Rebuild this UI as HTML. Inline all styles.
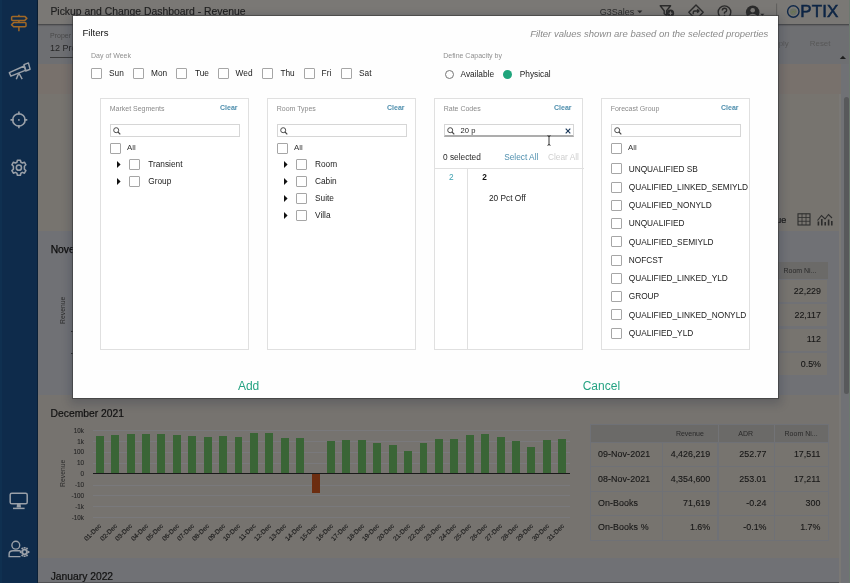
<!DOCTYPE html>
<html><head><meta charset="utf-8">
<style>
*{margin:0;padding:0;box-sizing:border-box}
html,body{width:850px;height:583px;overflow:hidden;background:#707175;font-family:"Liberation Sans",sans-serif}
.a{position:absolute}
.t{position:absolute;white-space:nowrap;line-height:1}
.b{-webkit-text-stroke:0.25px currentColor}
.cb{position:absolute;border:1px solid #a6a6a6;border-radius:1px;background:#fff}
svg{position:absolute;overflow:visible}
#root{position:absolute;left:0;top:0;width:850px;height:583px;overflow:hidden;filter:blur(0.3px)}
</style></head><body>
<div id="root">
<div class="a" style="left:0px;top:0px;width:38px;height:583px;background:#0e2b4b"></div>
<div class="a" style="left:0px;top:0px;width:2px;height:583px;background:#0f3050"></div>
<div class="a" style="left:37px;top:0px;width:1px;height:583px;background:#0a2038"></div>
<div class="a" style="left:38px;top:24px;width:812px;height:40px;background:#6e6f72"></div>
<div class="a" style="left:38px;top:0px;width:812px;height:24px;background:#7a7875;box-shadow:0 1px 1.5px rgba(0,0,0,.45)"></div>
<div class="a" style="left:38px;top:64px;width:803px;height:30px;background:#78716c"></div>
<div class="a" style="left:38px;top:94px;width:803px;height:137px;background:#77746f"></div>
<div class="a" style="left:38px;top:231px;width:803px;height:164px;background:#707175"></div>
<div class="a" style="left:38px;top:395px;width:803px;height:163px;background:#76736f"></div>
<div class="a" style="left:38px;top:558px;width:803px;height:24px;background:#707175"></div>
<div class="a" style="left:38px;top:582px;width:812px;height:1px;background:#505154"></div>
<div class="a" style="left:839px;top:94px;width:2px;height:489px;background:#7a7875"></div>
<div class="a" style="left:841px;top:64px;width:8px;height:519px;background:#707175"></div>
<div class="a" style="left:843.8px;top:96.8px;width:5px;height:297px;background:#58595b;border-radius:3px"></div>
<div class="a" style="left:849px;top:0px;width:1px;height:583px;background:#6b7a6e"></div>
<div class="t" style="left:50.40px;top:7.22px;font-size:10.4px;color:#1e1e1e;-webkit-text-stroke:0.15px #1e1e1e">Pickup and Change Dashboard - Revenue</div>
<div class="t" style="left:50.00px;top:32.18px;font-size:7px;color:#4a4a4a;">Proper</div>
<div class="t" style="left:50.00px;top:43.90px;font-size:9px;color:#262626;">12 Properties</div>
<div class="a" style="left:50px;top:57px;width:120px;height:1px;background:#3a3a3a"></div>
<div class="t" style="left:599.70px;top:7.90px;font-size:9px;color:#2a2a2a;">G3Sales</div>
<div class="t" style="left:769.00px;top:40.44px;font-size:7.9px;color:#585858;">Apply</div>
<div class="t" style="left:809.80px;top:40.44px;font-size:7.9px;color:#585858;">Reset</div>
<svg style="left:839px;top:55px" width="8" height="5" viewBox="0 0 8 5"><path d="M0.8 4H7L3.9 0.8Z" fill="#1e1e1e"/></svg>
<div class="t" style="left:50.70px;top:244.87px;font-size:10.3px;color:#0d0d0d;-webkit-text-stroke:0.25px #0d0d0d">November 2021</div>
<div class="a" style="left:71px;top:331.3px;width:2px;height:1.2px;background:#333"></div>
<div class="a" style="left:71px;top:353.3px;width:2px;height:1.2px;background:#333"></div>
<svg style="left:0;top:0" width="38" height="200" viewBox="0 0 38 200">
<g fill="none" stroke="#a06826" stroke-width="1.5" stroke-linejoin="round">
<path d="M12.6 16.4 H24.8 L26.9 18.4 L24.8 20.4 H12.6 Q11.6 20.4 11.6 19.4 V17.4 Q11.6 16.4 12.6 16.4Z"/>
<path d="M13.6 22.6 H25 Q26 22.6 26 23.6 V25.8 Q26 26.8 25 26.8 H13.6 L11.5 24.7Z"/>
<path d="M18.9 14.8 V16.4 M18.9 20.4 V22.6 M18.9 26.8 V31.2"/>
</g>
<g fill="none" stroke="#9aa0a8" stroke-width="1.45" stroke-linejoin="round">
<path d="M9.3 72.6 L24.2 66 L25.9 70.2 L10.9 76.2Z"/>
<path d="M24 64.6 L28.4 62.9 L30.1 69.3 L25.7 71Z"/>
<path d="M18.7 73.4 L16.3 79.2 M19 73.4 L22.2 79.2"/>
</g>
<g fill="none" stroke="#9aa0a8" stroke-width="1.6">
<circle cx="18.9" cy="119.9" r="6.2"/>
<path d="M18.9 111.5 V114.8 M18.9 125 V128.3 M10.5 119.9 H13.8 M24 119.9 H27.3"/>
</g>
<circle cx="18.9" cy="119.9" r="0.9" fill="#9aa0a8"/>
<g fill="none" stroke="#9aa0a8" stroke-width="1.55" stroke-linejoin="round">
<path d="M17.4 160.2 H20.4 L20.9 162.2 L22.4 163 L24.4 162.2 L25.9 164.8 L24.4 166.2 V169.2 L25.9 170.6 L24.4 173.2 L22.4 172.4 L20.9 173.2 L20.4 175.2 H17.4 L16.9 173.2 L15.4 172.4 L13.4 173.2 L11.9 170.6 L13.4 169.2 V166.2 L11.9 164.8 L13.4 162.2 L15.4 163 L16.9 162.2Z"/>
<circle cx="18.9" cy="167.7" r="2.6"/>
</g>
</svg>
<svg style="left:0;top:480px" width="38" height="100" viewBox="0 480 38 100">
<g fill="none" stroke="#9aa0a8" stroke-width="1.5">
<rect x="10.2" y="493.2" width="17" height="10.6" rx="1.6"/>
<path d="M13 508.4 H24.6"/>
</g>
<path d="M17 504 H20.6 L21 507.5 H16.6Z" fill="#9aa0a8"/>
<g fill="none" stroke="#9aa0a8" stroke-width="1.4">
<circle cx="15.8" cy="545.2" r="3.9"/>
<path d="M20.5 550.8 H13 Q9.1 550.8 9.1 554.3 V556.6 H20.5"/>
</g>
<g fill="#9aa0a8">
<circle cx="24.6" cy="552" r="3.3"/>
<path d="M23.7 546.9 H25.5 L25.9 548.6 H23.3Z M23.7 557.1 H25.5 L25.9 555.4 H23.3Z" />
<path d="M19.8 551.1 V552.9 L21.6 553.3 V550.7Z M29.4 551.1 V552.9 L27.6 553.3 V550.7Z"/>
<path d="M21 548.4 L22.3 547.2 L23.4 548.6 L22.2 549.8Z M28.2 555.6 L26.9 556.8 L25.8 555.4 L27 554.2Z M28.2 548.4 L26.9 547.2 L25.8 548.6 L27 549.8Z M21 555.6 L22.3 556.8 L23.4 555.4 L22.2 554.2Z"/>
</g>
<circle cx="24.6" cy="552" r="1.4" fill="#0e2b4b"/>
</svg>
<svg style="left:640px;top:0" width="210" height="24" viewBox="640 0 210 24">
<g fill="none" stroke="#2b2b2b" stroke-width="1.4" stroke-linejoin="round">
<path d="M660.2 5.8 H670.6 L666.6 10.8 V15.5 L664.2 13.8 V10.8Z"/>
<path d="M696 5 L703.2 12.2 L696 19.4 L688.8 12.2Z"/>
<path d="M693.2 14.3 V12.6 Q693.2 11 694.8 11 H698.8 M697.2 9.2 L699 11 L697.2 12.8"/>
<circle cx="724.5" cy="12.2" r="6.3"/>
<path d="M722.3 10.4 Q722.3 8.2 724.5 8.2 Q726.7 8.2 726.7 10.2 Q726.7 11.6 724.5 12.4 V13.7"/>
</g>
<circle cx="670.5" cy="13.2" r="3.6" fill="#2b2b2b"/>
<path d="M670.5 11.4 V15 M668.7 13.2 H672.3" stroke="#7a7875" stroke-width="1"/>
<circle cx="724.5" cy="15.6" r="0.8" fill="#2b2b2b"/>
<circle cx="752.7" cy="12.2" r="6.8" fill="#2b2b2b"/>
<circle cx="752.7" cy="10.2" r="2.3" fill="#7a7875"/>
<path d="M748.7 16.4 Q752.7 13 756.7 16.4" stroke="#7a7875" stroke-width="1.6" fill="none"/>
<path d="M760.2 13.8 H764.4 L762.3 16Z" fill="#2b2b2b"/>
<path d="M776.6 3.5 V24" stroke="#5f5e5c" stroke-width="1"/>
<path d="M637.2 10.6 H642.4 L639.8 13.2Z" fill="#2b2b2b"/>
<circle cx="793.3" cy="11.5" r="5.7" fill="none" stroke="#10294a" stroke-width="1.4"/>
<circle cx="793.3" cy="11.8" r="3.4" fill="#5c6b58" opacity=".55"/><path d="M791.5 13.5 L793 11 L794.5 12.5 L795.5 10.5" stroke="#6a7a3a" stroke-width=".8" fill="none" opacity=".6"/>
</svg>
<div class="t" style="left:800.30px;top:3.40px;font-size:17px;color:#0d2545;-webkit-text-stroke:0.55px #0d2545;letter-spacing:0.1px">PTIX</div>
<div class="t" style="right:63.70px;top:215.50px;font-size:9px;color:#1a1a1a;-webkit-text-stroke:0.2px #1a1a1a">ue</div>
<svg style="left:790px;top:205px" width="50" height="25" viewBox="790 205 50 25">
<g fill="none" stroke="#2e2e2e" stroke-width="1.1">
<rect x="798" y="213.8" width="12" height="11.2"/>
<path d="M798 217.5 H810 M798 221.3 H810 M802 213.8 V225 M806 213.8 V225" stroke-width=".8"/>
<path d="M817.5 220.5 L821.5 215.5 L825 219 L828.5 214.5 L832 218"/>
</g>
<g fill="#2b2b2b"><rect x="817.6" y="221.5" width="1.6" height="4"/><rect x="821" y="219" width="1.6" height="6.5"/><rect x="824.4" y="222" width="1.6" height="3.5"/><rect x="827.8" y="219.5" width="1.6" height="6"/><rect x="831" y="221" width="1.6" height="4.5"/></g>
</svg>
<div class="a" style="left:700px;top:261.6px;width:128px;height:17.3px;background:#6b6a68"></div>
<div class="t" style="right:33.50px;top:266.78px;font-size:7px;color:#2a2a2a;">Room Ni...</div>
<div class="a" style="left:700px;top:280.0px;width:127.3px;height:22px;background:#77746f"></div>
<div class="t" style="right:29.00px;top:286.65px;font-size:8.9px;color:#161616;-webkit-text-stroke:0.1px #161616">22,229</div>
<div class="a" style="left:700px;top:304.35px;width:127.3px;height:22px;background:#77746f"></div>
<div class="t" style="right:29.00px;top:311.00px;font-size:8.9px;color:#161616;-webkit-text-stroke:0.1px #161616">22,117</div>
<div class="a" style="left:700px;top:328.7px;width:127.3px;height:22px;background:#77746f"></div>
<div class="t" style="right:29.00px;top:335.35px;font-size:8.9px;color:#161616;-webkit-text-stroke:0.1px #161616">112</div>
<div class="a" style="left:700px;top:353.05px;width:127.3px;height:22px;background:#77746f"></div>
<div class="t" style="right:29.00px;top:359.70px;font-size:8.9px;color:#161616;-webkit-text-stroke:0.1px #161616">0.5%</div>
<div class="t" style="right:766.00px;top:427.72px;font-size:6.3px;color:#262626;-webkit-text-stroke:0.1px #262626">10k</div>
<div class="a" style="left:92.5px;top:430.3px;width:477.8px;height:1px;background:#79797c"></div>
<div class="t" style="right:766.00px;top:438.57px;font-size:6.3px;color:#262626;-webkit-text-stroke:0.1px #262626">1k</div>
<div class="a" style="left:92.5px;top:441.15000000000003px;width:477.8px;height:1px;background:#79797c"></div>
<div class="t" style="right:766.00px;top:449.42px;font-size:6.3px;color:#262626;-webkit-text-stroke:0.1px #262626">100</div>
<div class="a" style="left:92.5px;top:452.0px;width:477.8px;height:1px;background:#79797c"></div>
<div class="t" style="right:766.00px;top:460.27px;font-size:6.3px;color:#262626;-webkit-text-stroke:0.1px #262626">10</div>
<div class="a" style="left:92.5px;top:462.85px;width:477.8px;height:1px;background:#79797c"></div>
<div class="t" style="right:766.00px;top:471.12px;font-size:6.3px;color:#262626;-webkit-text-stroke:0.1px #262626">0</div>
<div class="a" style="left:92.5px;top:472.6px;width:477.8px;height:1.4px;background:#1a1a1a"></div>
<div class="t" style="right:766.00px;top:481.97px;font-size:6.3px;color:#262626;-webkit-text-stroke:0.1px #262626">-10</div>
<div class="a" style="left:92.5px;top:484.55px;width:477.8px;height:1px;background:#79797c"></div>
<div class="t" style="right:766.00px;top:492.82px;font-size:6.3px;color:#262626;-webkit-text-stroke:0.1px #262626">-100</div>
<div class="a" style="left:92.5px;top:495.4px;width:477.8px;height:1px;background:#79797c"></div>
<div class="t" style="right:766.00px;top:503.67px;font-size:6.3px;color:#262626;-webkit-text-stroke:0.1px #262626">-1k</div>
<div class="a" style="left:92.5px;top:506.25px;width:477.8px;height:1px;background:#79797c"></div>
<div class="t" style="right:766.00px;top:514.52px;font-size:6.3px;color:#262626;-webkit-text-stroke:0.1px #262626">-10k</div>
<div class="a" style="left:92.5px;top:517.1px;width:477.8px;height:1px;background:#79797c"></div>
<div class="t" style="left:49.5px;top:469.7px;font-size:6.8px;color:#2c2c2c;width:27px;text-align:center;transform:rotate(-90deg)">Revenue</div>
<div class="t" style="left:49.5px;top:306.5px;font-size:6.8px;color:#2c2c2c;width:27px;text-align:center;transform:rotate(-90deg)">Revenue</div>
<div class="a" style="left:95.8px;top:435.7px;width:7.9px;height:37.30000000000001px;background:#3a6536"></div>
<div class="t" style="right:751.60px;top:523.00px;font-size:6.5px;color:#1e1e1e;-webkit-text-stroke:0.15px #1e1e1e;transform:rotate(-45deg);transform-origin:100% 0">01-Dec</div>
<div class="a" style="left:111.22px;top:434.5px;width:7.9px;height:38.5px;background:#3a6536"></div>
<div class="t" style="right:736.18px;top:523.00px;font-size:6.5px;color:#1e1e1e;-webkit-text-stroke:0.15px #1e1e1e;transform:rotate(-45deg);transform-origin:100% 0">02-Dec</div>
<div class="a" style="left:126.63px;top:433.8px;width:7.9px;height:39.19999999999999px;background:#3a6536"></div>
<div class="t" style="right:720.77px;top:523.00px;font-size:6.5px;color:#1e1e1e;-webkit-text-stroke:0.15px #1e1e1e;transform:rotate(-45deg);transform-origin:100% 0">03-Dec</div>
<div class="a" style="left:142.05px;top:433.8px;width:7.9px;height:39.19999999999999px;background:#3a6536"></div>
<div class="t" style="right:705.35px;top:523.00px;font-size:6.5px;color:#1e1e1e;-webkit-text-stroke:0.15px #1e1e1e;transform:rotate(-45deg);transform-origin:100% 0">04-Dec</div>
<div class="a" style="left:157.47px;top:433.8px;width:7.9px;height:39.19999999999999px;background:#3a6536"></div>
<div class="t" style="right:689.93px;top:523.00px;font-size:6.5px;color:#1e1e1e;-webkit-text-stroke:0.15px #1e1e1e;transform:rotate(-45deg);transform-origin:100% 0">05-Dec</div>
<div class="a" style="left:172.88px;top:434.5px;width:7.9px;height:38.5px;background:#3a6536"></div>
<div class="t" style="right:674.51px;top:523.00px;font-size:6.5px;color:#1e1e1e;-webkit-text-stroke:0.15px #1e1e1e;transform:rotate(-45deg);transform-origin:100% 0">06-Dec</div>
<div class="a" style="left:188.3px;top:435.7px;width:7.9px;height:37.30000000000001px;background:#3a6536"></div>
<div class="t" style="right:659.10px;top:523.00px;font-size:6.5px;color:#1e1e1e;-webkit-text-stroke:0.15px #1e1e1e;transform:rotate(-45deg);transform-origin:100% 0">07-Dec</div>
<div class="a" style="left:203.72px;top:436.7px;width:7.9px;height:36.30000000000001px;background:#3a6536"></div>
<div class="t" style="right:643.68px;top:523.00px;font-size:6.5px;color:#1e1e1e;-webkit-text-stroke:0.15px #1e1e1e;transform:rotate(-45deg);transform-origin:100% 0">08-Dec</div>
<div class="a" style="left:219.14px;top:435.9px;width:7.9px;height:37.10000000000002px;background:#3a6536"></div>
<div class="t" style="right:628.26px;top:523.00px;font-size:6.5px;color:#1e1e1e;-webkit-text-stroke:0.15px #1e1e1e;transform:rotate(-45deg);transform-origin:100% 0">09-Dec</div>
<div class="a" style="left:234.55px;top:436.9px;width:7.9px;height:36.10000000000002px;background:#3a6536"></div>
<div class="t" style="right:612.85px;top:523.00px;font-size:6.5px;color:#1e1e1e;-webkit-text-stroke:0.15px #1e1e1e;transform:rotate(-45deg);transform-origin:100% 0">10-Dec</div>
<div class="a" style="left:249.97px;top:432.6px;width:7.9px;height:40.39999999999998px;background:#3a6536"></div>
<div class="t" style="right:597.43px;top:523.00px;font-size:6.5px;color:#1e1e1e;-webkit-text-stroke:0.15px #1e1e1e;transform:rotate(-45deg);transform-origin:100% 0">11-Dec</div>
<div class="a" style="left:265.39px;top:432.6px;width:7.9px;height:40.39999999999998px;background:#3a6536"></div>
<div class="t" style="right:582.01px;top:523.00px;font-size:6.5px;color:#1e1e1e;-webkit-text-stroke:0.15px #1e1e1e;transform:rotate(-45deg);transform-origin:100% 0">12-Dec</div>
<div class="a" style="left:280.8px;top:437.8px;width:7.9px;height:35.19999999999999px;background:#3a6536"></div>
<div class="t" style="right:566.60px;top:523.00px;font-size:6.5px;color:#1e1e1e;-webkit-text-stroke:0.15px #1e1e1e;transform:rotate(-45deg);transform-origin:100% 0">13-Dec</div>
<div class="a" style="left:296.22px;top:438.4px;width:7.9px;height:34.60000000000002px;background:#3a6536"></div>
<div class="t" style="right:551.18px;top:523.00px;font-size:6.5px;color:#1e1e1e;-webkit-text-stroke:0.15px #1e1e1e;transform:rotate(-45deg);transform-origin:100% 0">14-Dec</div>
<div class="a" style="left:311.64px;top:473.5px;width:7.9px;height:19.7px;background:#6c2d10"></div>
<div class="t" style="right:535.76px;top:523.00px;font-size:6.5px;color:#1e1e1e;-webkit-text-stroke:0.15px #1e1e1e;transform:rotate(-45deg);transform-origin:100% 0">15-Dec</div>
<div class="a" style="left:327.06px;top:441px;width:7.9px;height:32px;background:#3a6536"></div>
<div class="t" style="right:520.35px;top:523.00px;font-size:6.5px;color:#1e1e1e;-webkit-text-stroke:0.15px #1e1e1e;transform:rotate(-45deg);transform-origin:100% 0">16-Dec</div>
<div class="a" style="left:342.47px;top:439.9px;width:7.9px;height:33.10000000000002px;background:#3a6536"></div>
<div class="t" style="right:504.93px;top:523.00px;font-size:6.5px;color:#1e1e1e;-webkit-text-stroke:0.15px #1e1e1e;transform:rotate(-45deg);transform-origin:100% 0">17-Dec</div>
<div class="a" style="left:357.89px;top:439.9px;width:7.9px;height:33.10000000000002px;background:#3a6536"></div>
<div class="t" style="right:489.51px;top:523.00px;font-size:6.5px;color:#1e1e1e;-webkit-text-stroke:0.15px #1e1e1e;transform:rotate(-45deg);transform-origin:100% 0">18-Dec</div>
<div class="a" style="left:373.31px;top:443.1px;width:7.9px;height:29.899999999999977px;background:#3a6536"></div>
<div class="t" style="right:474.09px;top:523.00px;font-size:6.5px;color:#1e1e1e;-webkit-text-stroke:0.15px #1e1e1e;transform:rotate(-45deg);transform-origin:100% 0">19-Dec</div>
<div class="a" style="left:388.72px;top:445.3px;width:7.9px;height:27.69999999999999px;background:#3a6536"></div>
<div class="t" style="right:458.68px;top:523.00px;font-size:6.5px;color:#1e1e1e;-webkit-text-stroke:0.15px #1e1e1e;transform:rotate(-45deg);transform-origin:100% 0">20-Dec</div>
<div class="a" style="left:404.14px;top:451.4px;width:7.9px;height:21.600000000000023px;background:#3a6536"></div>
<div class="t" style="right:443.26px;top:523.00px;font-size:6.5px;color:#1e1e1e;-webkit-text-stroke:0.15px #1e1e1e;transform:rotate(-45deg);transform-origin:100% 0">21-Dec</div>
<div class="a" style="left:419.56px;top:442.5px;width:7.9px;height:30.5px;background:#3a6536"></div>
<div class="t" style="right:427.84px;top:523.00px;font-size:6.5px;color:#1e1e1e;-webkit-text-stroke:0.15px #1e1e1e;transform:rotate(-45deg);transform-origin:100% 0">22-Dec</div>
<div class="a" style="left:434.97px;top:438.7px;width:7.9px;height:34.30000000000001px;background:#3a6536"></div>
<div class="t" style="right:412.43px;top:523.00px;font-size:6.5px;color:#1e1e1e;-webkit-text-stroke:0.15px #1e1e1e;transform:rotate(-45deg);transform-origin:100% 0">23-Dec</div>
<div class="a" style="left:450.39px;top:438.7px;width:7.9px;height:34.30000000000001px;background:#3a6536"></div>
<div class="t" style="right:397.01px;top:523.00px;font-size:6.5px;color:#1e1e1e;-webkit-text-stroke:0.15px #1e1e1e;transform:rotate(-45deg);transform-origin:100% 0">24-Dec</div>
<div class="a" style="left:465.81px;top:435.2px;width:7.9px;height:37.80000000000001px;background:#3a6536"></div>
<div class="t" style="right:381.59px;top:523.00px;font-size:6.5px;color:#1e1e1e;-webkit-text-stroke:0.15px #1e1e1e;transform:rotate(-45deg);transform-origin:100% 0">25-Dec</div>
<div class="a" style="left:481.23px;top:433.6px;width:7.9px;height:39.39999999999998px;background:#3a6536"></div>
<div class="t" style="right:366.17px;top:523.00px;font-size:6.5px;color:#1e1e1e;-webkit-text-stroke:0.15px #1e1e1e;transform:rotate(-45deg);transform-origin:100% 0">26-Dec</div>
<div class="a" style="left:496.64px;top:436.8px;width:7.9px;height:36.19999999999999px;background:#3a6536"></div>
<div class="t" style="right:350.76px;top:523.00px;font-size:6.5px;color:#1e1e1e;-webkit-text-stroke:0.15px #1e1e1e;transform:rotate(-45deg);transform-origin:100% 0">27-Dec</div>
<div class="a" style="left:512.06px;top:440.9px;width:7.9px;height:32.10000000000002px;background:#3a6536"></div>
<div class="t" style="right:335.34px;top:523.00px;font-size:6.5px;color:#1e1e1e;-webkit-text-stroke:0.15px #1e1e1e;transform:rotate(-45deg);transform-origin:100% 0">28-Dec</div>
<div class="a" style="left:527.48px;top:446.6px;width:7.9px;height:26.399999999999977px;background:#3a6536"></div>
<div class="t" style="right:319.92px;top:523.00px;font-size:6.5px;color:#1e1e1e;-webkit-text-stroke:0.15px #1e1e1e;transform:rotate(-45deg);transform-origin:100% 0">29-Dec</div>
<div class="a" style="left:542.89px;top:440px;width:7.9px;height:33px;background:#3a6536"></div>
<div class="t" style="right:304.51px;top:523.00px;font-size:6.5px;color:#1e1e1e;-webkit-text-stroke:0.15px #1e1e1e;transform:rotate(-45deg);transform-origin:100% 0">30-Dec</div>
<div class="a" style="left:558.31px;top:438.7px;width:7.9px;height:34.30000000000001px;background:#3a6536"></div>
<div class="t" style="right:289.09px;top:523.00px;font-size:6.5px;color:#1e1e1e;-webkit-text-stroke:0.15px #1e1e1e;transform:rotate(-45deg);transform-origin:100% 0">31-Dec</div>
<div class="a" style="left:590.4px;top:423.8px;width:238.3px;height:117px;background:#6f7176"></div>
<div class="a" style="left:591.4px;top:424.8px;width:236.3px;height:17.4px;background:#6b6a68"></div>
<div class="a" style="left:591.4px;top:442.8px;width:71.0px;height:23.4px;background:#77746f"></div>
<div class="t" style="left:597.90px;top:450.15px;font-size:8.9px;color:#161616;letter-spacing:0.1px;-webkit-text-stroke:0.1px #161616">09-Nov-2021</div>
<div class="a" style="left:663.4px;top:442.8px;width:54.1px;height:23.4px;background:#77746f"></div>
<div class="t" style="right:139.80px;top:450.15px;font-size:8.9px;color:#161616;-webkit-text-stroke:0.1px #161616">4,426,219</div>
<div class="a" style="left:718.5px;top:442.8px;width:55.3px;height:23.4px;background:#77746f"></div>
<div class="t" style="right:83.50px;top:450.15px;font-size:8.9px;color:#161616;-webkit-text-stroke:0.1px #161616">252.77</div>
<div class="a" style="left:774.8px;top:442.8px;width:52.9px;height:23.4px;background:#77746f"></div>
<div class="t" style="right:29.60px;top:450.15px;font-size:8.9px;color:#161616;-webkit-text-stroke:0.1px #161616">17,511</div>
<div class="a" style="left:591.4px;top:467.2px;width:71.0px;height:23.8px;background:#77746f"></div>
<div class="t" style="left:597.90px;top:474.75px;font-size:8.9px;color:#161616;letter-spacing:0.1px;-webkit-text-stroke:0.1px #161616">08-Nov-2021</div>
<div class="a" style="left:663.4px;top:467.2px;width:54.1px;height:23.8px;background:#77746f"></div>
<div class="t" style="right:139.80px;top:474.75px;font-size:8.9px;color:#161616;-webkit-text-stroke:0.1px #161616">4,354,600</div>
<div class="a" style="left:718.5px;top:467.2px;width:55.3px;height:23.8px;background:#77746f"></div>
<div class="t" style="right:83.50px;top:474.75px;font-size:8.9px;color:#161616;-webkit-text-stroke:0.1px #161616">253.01</div>
<div class="a" style="left:774.8px;top:467.2px;width:52.9px;height:23.8px;background:#77746f"></div>
<div class="t" style="right:29.60px;top:474.75px;font-size:8.9px;color:#161616;-webkit-text-stroke:0.1px #161616">17,211</div>
<div class="a" style="left:591.4px;top:492px;width:71.0px;height:23px;background:#77746f"></div>
<div class="t" style="left:597.90px;top:499.15px;font-size:8.9px;color:#161616;letter-spacing:0.1px;-webkit-text-stroke:0.1px #161616">On-Books</div>
<div class="a" style="left:663.4px;top:492px;width:54.1px;height:23px;background:#77746f"></div>
<div class="t" style="right:139.80px;top:499.15px;font-size:8.9px;color:#161616;-webkit-text-stroke:0.1px #161616">71,619</div>
<div class="a" style="left:718.5px;top:492px;width:55.3px;height:23px;background:#77746f"></div>
<div class="t" style="right:83.50px;top:499.15px;font-size:8.9px;color:#161616;-webkit-text-stroke:0.1px #161616">-0.24</div>
<div class="a" style="left:774.8px;top:492px;width:52.9px;height:23px;background:#77746f"></div>
<div class="t" style="right:29.60px;top:499.15px;font-size:8.9px;color:#161616;-webkit-text-stroke:0.1px #161616">300</div>
<div class="a" style="left:591.4px;top:516px;width:71.0px;height:23.5px;background:#77746f"></div>
<div class="t" style="left:597.90px;top:523.40px;font-size:8.9px;color:#161616;letter-spacing:0.1px;-webkit-text-stroke:0.1px #161616">On-Books %</div>
<div class="a" style="left:663.4px;top:516px;width:54.1px;height:23.5px;background:#77746f"></div>
<div class="t" style="right:139.80px;top:523.40px;font-size:8.9px;color:#161616;-webkit-text-stroke:0.1px #161616">1.6%</div>
<div class="a" style="left:718.5px;top:516px;width:55.3px;height:23.5px;background:#77746f"></div>
<div class="t" style="right:83.50px;top:523.40px;font-size:8.9px;color:#161616;-webkit-text-stroke:0.1px #161616">-0.1%</div>
<div class="a" style="left:774.8px;top:516px;width:52.9px;height:23.5px;background:#77746f"></div>
<div class="t" style="right:29.60px;top:523.40px;font-size:8.9px;color:#161616;-webkit-text-stroke:0.1px #161616">1.7%</div>
<div class="a" style="left:717.5px;top:424.8px;width:1px;height:17.4px;background:#727376"></div>
<div class="a" style="left:773.8px;top:424.8px;width:1px;height:17.4px;background:#727376"></div>
<div class="t" style="right:146.10px;top:429.78px;font-size:7px;color:#2a2a2a;">Revenue</div>
<div class="t" style="right:97.00px;top:429.78px;font-size:7px;color:#2a2a2a;">ADR</div>
<div class="t" style="right:32.40px;top:429.78px;font-size:7px;color:#2a2a2a;">Room Ni...</div>
<div class="t" style="left:50.70px;top:571.57px;font-size:10.3px;color:#111;-webkit-text-stroke:0.2px #111">January 2022</div>
<div class="t" style="left:50.60px;top:408.57px;font-size:10.3px;color:#111;-webkit-text-stroke:0.2px #111">December 2021</div>
<div class="a" style="left:72.5px;top:16px;width:705px;height:382px;background:#fefefe;box-shadow:0 0 0.5px 0.7px rgba(50,50,50,.55),0 3px 9px 3px rgba(15,25,50,.2)"></div>
<div class="t" style="left:82.50px;top:28.31px;font-size:9.6px;color:#141414;">Filters</div>
<div class="t" style="left:91.00px;top:51.58px;font-size:7px;color:#8f8f8f;">Day of Week</div>
<div class="cb" style="left:91px;top:68px;width:11px;height:11px"></div>
<div class="t" style="left:109.00px;top:69.25px;font-size:8.3px;color:#222;">Sun</div>
<div class="cb" style="left:133.4px;top:68px;width:11px;height:11px"></div>
<div class="t" style="left:151.00px;top:69.25px;font-size:8.3px;color:#222;">Mon</div>
<div class="cb" style="left:176px;top:68px;width:11px;height:11px"></div>
<div class="t" style="left:195.00px;top:69.25px;font-size:8.3px;color:#222;">Tue</div>
<div class="cb" style="left:218px;top:68px;width:11px;height:11px"></div>
<div class="t" style="left:235.60px;top:69.25px;font-size:8.3px;color:#222;">Wed</div>
<div class="cb" style="left:262px;top:68px;width:11px;height:11px"></div>
<div class="t" style="left:280.40px;top:69.25px;font-size:8.3px;color:#222;">Thu</div>
<div class="cb" style="left:303.6px;top:68px;width:11px;height:11px"></div>
<div class="t" style="left:321.60px;top:69.25px;font-size:8.3px;color:#222;">Fri</div>
<div class="cb" style="left:341px;top:68px;width:11px;height:11px"></div>
<div class="t" style="left:359.00px;top:69.25px;font-size:8.3px;color:#222;">Sat</div>
<div class="t" style="left:443.20px;top:51.88px;font-size:7px;color:#8f8f8f;">Define Capacity by</div>
<div class="a" style="left:445.2px;top:69.7px;width:9px;height:9px;border:1px solid #777;border-radius:50%"></div>
<div class="t" style="left:460.50px;top:70.15px;font-size:8.3px;color:#222;">Available</div>
<div class="a" style="left:503.4px;top:69.7px;width:9px;height:9px;background:#1fa57c;border-radius:50%"></div>
<div class="t" style="left:519.80px;top:70.15px;font-size:8.3px;color:#222;">Physical</div>
<div class="t" style="right:81.70px;top:28.56px;font-size:9.5px;color:#8a8a8a;font-style:italic">Filter values shown are based on the selected properties</div>
<div class="a" style="left:100px;top:97.5px;width:149px;height:252px;border:1px solid #e0e0e0;background:#fff"></div>
<div class="t" style="left:109.70px;top:104.88px;font-size:7px;color:#8a8a8a;">Market Segments</div>
<div class="t" style="right:612.50px;top:104.08px;font-size:7px;color:#4f8fae;font-weight:bold">Clear</div>
<div class="a" style="left:109.7px;top:124.3px;width:130px;height:12.5px;border:1px solid #d6d6d6"></div>
<svg style="left:112.7px;top:126.5px" width="8" height="8" viewBox="0 0 8 8"><circle cx="3.2" cy="3.2" r="2.5" fill="none" stroke="#444" stroke-width="0.95"/><line x1="5" y1="5" x2="7.3" y2="7.3" stroke="#444" stroke-width="1.1"/></svg>
<div class="cb" style="left:109.7px;top:143px;width:11px;height:11px"></div>
<div class="t" style="left:127.00px;top:144.39px;font-size:7.8px;color:#333;">All</div>
<div class="a" style="left:267px;top:97.5px;width:149px;height:252px;border:1px solid #e0e0e0;background:#fff"></div>
<div class="t" style="left:276.70px;top:104.88px;font-size:7px;color:#8a8a8a;">Room Types</div>
<div class="t" style="right:445.50px;top:104.08px;font-size:7px;color:#4f8fae;font-weight:bold">Clear</div>
<div class="a" style="left:276.7px;top:124.3px;width:130px;height:12.5px;border:1px solid #d6d6d6"></div>
<svg style="left:279.7px;top:126.5px" width="8" height="8" viewBox="0 0 8 8"><circle cx="3.2" cy="3.2" r="2.5" fill="none" stroke="#444" stroke-width="0.95"/><line x1="5" y1="5" x2="7.3" y2="7.3" stroke="#444" stroke-width="1.1"/></svg>
<div class="cb" style="left:276.7px;top:143px;width:11px;height:11px"></div>
<div class="t" style="left:294.00px;top:144.39px;font-size:7.8px;color:#333;">All</div>
<div class="a" style="left:434px;top:97.5px;width:149px;height:252px;border:1px solid #e0e0e0;background:#fff"></div>
<div class="t" style="left:443.70px;top:104.88px;font-size:7px;color:#8a8a8a;">Rate Codes</div>
<div class="t" style="right:278.50px;top:104.08px;font-size:7px;color:#4f8fae;font-weight:bold">Clear</div>
<div class="a" style="left:601px;top:97.5px;width:149px;height:252px;border:1px solid #e0e0e0;background:#fff"></div>
<div class="t" style="left:610.70px;top:104.88px;font-size:7px;color:#8a8a8a;">Forecast Group</div>
<div class="t" style="right:111.50px;top:104.08px;font-size:7px;color:#4f8fae;font-weight:bold">Clear</div>
<div class="a" style="left:610.7px;top:124.3px;width:130px;height:12.5px;border:1px solid #d6d6d6"></div>
<svg style="left:613.7px;top:126.5px" width="8" height="8" viewBox="0 0 8 8"><circle cx="3.2" cy="3.2" r="2.5" fill="none" stroke="#444" stroke-width="0.95"/><line x1="5" y1="5" x2="7.3" y2="7.3" stroke="#444" stroke-width="1.1"/></svg>
<div class="cb" style="left:610.7px;top:143px;width:11px;height:11px"></div>
<div class="t" style="left:628.00px;top:144.39px;font-size:7.8px;color:#333;">All</div>
<svg style="left:117.3px;top:160.8px" width="4" height="7" viewBox="0 0 4 7"><path d="M0 0 L3.6 3.5 L0 7Z" fill="#111"/></svg>
<div class="cb" style="left:129.3px;top:158.7px;width:11px;height:11px"></div>
<div class="t" style="left:148.20px;top:159.95px;font-size:8.3px;color:#222;">Transient</div>
<svg style="left:117.3px;top:178.20000000000002px" width="4" height="7" viewBox="0 0 4 7"><path d="M0 0 L3.6 3.5 L0 7Z" fill="#111"/></svg>
<div class="cb" style="left:129.3px;top:176.1px;width:11px;height:11px"></div>
<div class="t" style="left:148.20px;top:177.35px;font-size:8.3px;color:#222;">Group</div>
<svg style="left:284.2px;top:161.3px" width="4" height="7" viewBox="0 0 4 7"><path d="M0 0 L3.6 3.5 L0 7Z" fill="#111"/></svg>
<div class="cb" style="left:296.2px;top:159.2px;width:11px;height:11px"></div>
<div class="t" style="left:315.00px;top:160.45px;font-size:8.3px;color:#222;">Room</div>
<svg style="left:284.2px;top:178.15px" width="4" height="7" viewBox="0 0 4 7"><path d="M0 0 L3.6 3.5 L0 7Z" fill="#111"/></svg>
<div class="cb" style="left:296.2px;top:176.04999999999998px;width:11px;height:11px"></div>
<div class="t" style="left:315.00px;top:177.30px;font-size:8.3px;color:#222;">Cabin</div>
<svg style="left:284.2px;top:195.0px" width="4" height="7" viewBox="0 0 4 7"><path d="M0 0 L3.6 3.5 L0 7Z" fill="#111"/></svg>
<div class="cb" style="left:296.2px;top:192.89999999999998px;width:11px;height:11px"></div>
<div class="t" style="left:315.00px;top:194.15px;font-size:8.3px;color:#222;">Suite</div>
<svg style="left:284.2px;top:211.85000000000002px" width="4" height="7" viewBox="0 0 4 7"><path d="M0 0 L3.6 3.5 L0 7Z" fill="#111"/></svg>
<div class="cb" style="left:296.2px;top:209.75px;width:11px;height:11px"></div>
<div class="t" style="left:315.00px;top:211.00px;font-size:8.3px;color:#222;">Villa</div>
<div class="a" style="left:443.8px;top:124.2px;width:130px;height:13px;border:1px solid #d6d6d6;border-bottom:2px solid #adadad"></div>
<svg style="left:446.7px;top:126.7px" width="8" height="8" viewBox="0 0 8 8"><circle cx="3.2" cy="3.2" r="2.5" fill="none" stroke="#444" stroke-width="0.95"/><line x1="5" y1="5" x2="7.3" y2="7.3" stroke="#444" stroke-width="1.1"/></svg>
<div class="t" style="left:460.60px;top:127.09px;font-size:7.6px;color:#222;">20 p</div>
<svg style="left:564.7px;top:128px" width="6" height="6" viewBox="0 0 6 6"><path d="M0.7 0.7L5.3 5.3M5.3 0.7L0.7 5.3" stroke="#1d3a5a" stroke-width="1.15"/></svg>
<div class="t" style="left:443.00px;top:152.75px;font-size:8.3px;color:#2a2a2a;">0 selected</div>
<div class="t" style="left:504.20px;top:152.95px;font-size:8.3px;color:#4f8fae;">Select All</div>
<div class="t" style="left:548.00px;top:152.95px;font-size:8.3px;color:#cfcfcf;">Clear All</div>
<div class="a" style="left:434.5px;top:168px;width:149px;height:1px;background:#e0e0e0"></div>
<div class="a" style="left:467px;top:168px;width:1px;height:181.5px;background:#e0e0e0"></div>
<div class="t" style="left:449.00px;top:173.45px;font-size:8.3px;color:#3fa0b0;">2</div>
<div class="t" style="left:482.30px;top:173.45px;font-size:8.3px;color:#111;font-weight:bold">2</div>
<div class="t" style="left:489.00px;top:193.95px;font-size:8.3px;color:#222;">20 Pct Off</div>
<svg style="left:546px;top:135px" width="6" height="11" viewBox="0 0 6 11"><path d="M1.5 0.6Q3 0.6 3 2M4.5 0.6Q3 0.6 3 2V9M1.5 10.4Q3 10.4 3 9M4.5 10.4Q3 10.4 3 9" stroke="#222" stroke-width="0.9" fill="none"/></svg>
<div class="cb" style="left:611px;top:163.39999999999998px;width:11px;height:11px"></div>
<div class="t" style="left:628.70px;top:164.65px;font-size:8.3px;color:#222;">UNQUALIFIED SB</div>
<div class="cb" style="left:611px;top:181.64px;width:11px;height:11px"></div>
<div class="t" style="left:628.70px;top:182.89px;font-size:8.3px;color:#222;">QUALIFIED_LINKED_SEMIYLD</div>
<div class="cb" style="left:611px;top:199.87999999999997px;width:11px;height:11px"></div>
<div class="t" style="left:628.70px;top:201.13px;font-size:8.3px;color:#222;">QUALIFIED_NONYLD</div>
<div class="cb" style="left:611px;top:218.11999999999998px;width:11px;height:11px"></div>
<div class="t" style="left:628.70px;top:219.37px;font-size:8.3px;color:#222;">UNQUALIFIED</div>
<div class="cb" style="left:611px;top:236.35999999999996px;width:11px;height:11px"></div>
<div class="t" style="left:628.70px;top:237.61px;font-size:8.3px;color:#222;">QUALIFIED_SEMIYLD</div>
<div class="cb" style="left:611px;top:254.59999999999997px;width:11px;height:11px"></div>
<div class="t" style="left:628.70px;top:255.85px;font-size:8.3px;color:#222;">NOFCST</div>
<div class="cb" style="left:611px;top:272.84px;width:11px;height:11px"></div>
<div class="t" style="left:628.70px;top:274.09px;font-size:8.3px;color:#222;">QUALIFIED_LINKED_YLD</div>
<div class="cb" style="left:611px;top:291.08px;width:11px;height:11px"></div>
<div class="t" style="left:628.70px;top:292.33px;font-size:8.3px;color:#222;">GROUP</div>
<div class="cb" style="left:611px;top:309.32px;width:11px;height:11px"></div>
<div class="t" style="left:628.70px;top:310.57px;font-size:8.3px;color:#222;">QUALIFIED_LINKED_NONYLD</div>
<div class="cb" style="left:611px;top:327.56px;width:11px;height:11px"></div>
<div class="t" style="left:628.70px;top:328.81px;font-size:8.3px;color:#222;">QUALIFIED_YLD</div>
<div class="t" style="left:237.90px;top:380.14px;font-size:12px;color:#26a383;">Add</div>
<div class="t" style="left:582.70px;top:380.14px;font-size:12px;color:#26a383;">Cancel</div>
</div>
</body></html>
